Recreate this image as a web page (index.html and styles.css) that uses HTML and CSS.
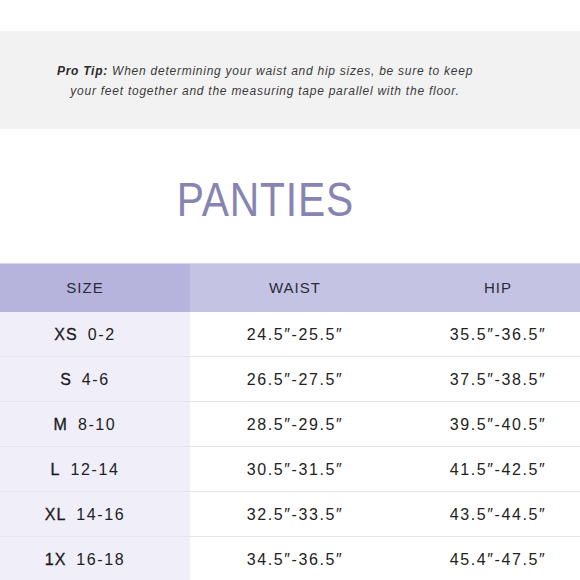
FILE: index.html
```html
<!DOCTYPE html>
<html>
<head>
<meta charset="utf-8">
<link rel="stylesheet" href="styles.css">
</head>
<body>
<div class="page">
  <section class="tip">
    <p><b>Pro Tip:</b> When determining your waist and hip sizes, be sure to keep<br>your feet together and the measuring tape parallel with the floor.</p>
  </section>
  <h1 class="title"><span class="title-text">PANTIES</span></h1>
  <div class="chart">
    <div class="row head">
      <div class="cell size">SIZE</div>
      <div class="cell">WAIST</div>
      <div class="cell hip">HIP</div>
    </div>
    <div class="row">
      <div class="cell size"><span class="lbl">XS</span><span>0-2</span></div>
      <div class="cell">24.5″-25.5″</div>
      <div class="cell hip">35.5″-36.5″</div>
    </div>
    <div class="row">
      <div class="cell size"><span class="lbl">S</span><span>4-6</span></div>
      <div class="cell">26.5″-27.5″</div>
      <div class="cell hip">37.5″-38.5″</div>
    </div>
    <div class="row">
      <div class="cell size"><span class="lbl">M</span><span>8-10</span></div>
      <div class="cell">28.5″-29.5″</div>
      <div class="cell hip">39.5″-40.5″</div>
    </div>
    <div class="row">
      <div class="cell size"><span class="lbl">L</span><span>12-14</span></div>
      <div class="cell">30.5″-31.5″</div>
      <div class="cell hip">41.5″-42.5″</div>
    </div>
    <div class="row">
      <div class="cell size"><span class="lbl">XL</span><span>14-16</span></div>
      <div class="cell">32.5″-33.5″</div>
      <div class="cell hip">43.5″-44.5″</div>
    </div>
    <div class="row">
      <div class="cell size"><span class="lbl">1X</span><span>16-18</span></div>
      <div class="cell">34.5″-36.5″</div>
      <div class="cell hip">45.4″-47.5″</div>
    </div>
  </div>
</div>
</body>
</html>
```
FILE: styles.css
```css
html, body {
  margin: 0;
  padding: 0;
  background: #ffffff;
}
body {
  font-family: "Liberation Sans", Arial, sans-serif;
  color: #222222;
  overflow: hidden;
}
.page {
  width: 580px;
  height: 580px;
  overflow: hidden;
}
.tip {
  margin-top: 31px;
  height: 98px;
  background: #f2f2f2;
  display: flex;
  align-items: center;
  padding-right: 50px;
  justify-content: center;
}
.tip p {
  margin: 0;
  font-size: 12px;
  line-height: 20px;
  font-style: italic;
  letter-spacing: 0.75px;
  color: #3a3a3a;
  text-align: center;
  padding-top: 1px;
}
.tip b {
  color: #2a2a2a;
}
.title {
  margin: 0;
  height: 134px;
  display: flex;
  align-items: center;
  justify-content: center;
  padding-right: 50px;
  padding-top: 6px;
  box-sizing: border-box;
  font-weight: 400;
  font-size: 48px;
  color: #8884b2;
}
.title-text {
  display: inline-block;
  letter-spacing: 1px;
  transform: scaleX(0.85);
}
.chart {
  width: 596px;
}
.row {
  display: grid;
  grid-template-columns: 190px 210px 196px;
  height: 44px;
  border-bottom: 1px solid #e6e6ea;
}
.row.head {
  height: 49px;
  border-bottom: none;
  background: #c5c3e3;
  border-top: 1px solid #d6d5ec;
  box-sizing: border-box;
}
.cell {
  display: flex;
  align-items: center;
  justify-content: center;
  font-size: 16px;
  letter-spacing: 1.6px;
  color: #222222;
  padding-top: 1px;
}
.row .size {
  background: #efeef9;
  gap: 10px;
  padding-right: 20px;
}
.row.head .size {
  background: #b6b4dc;
}
.row.head .cell {
  font-size: 15px;
  letter-spacing: 1px;
  color: #2b2a3a;
  padding-top: 0;
  padding-bottom: 1px;
}
.lbl {
  letter-spacing: 1px;
  color: #1a1a1a;
  -webkit-text-stroke: 0.3px #1a1a1a;
}
```
